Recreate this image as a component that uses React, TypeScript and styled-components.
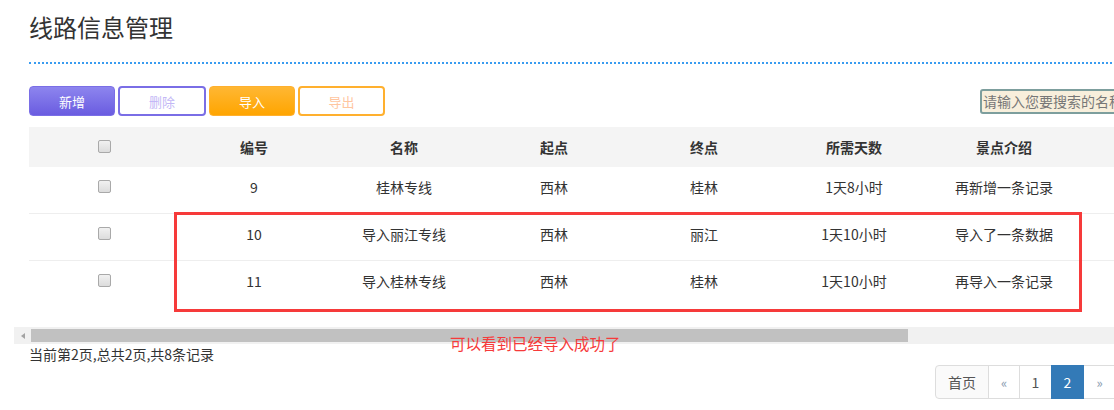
import React from 'react'
import styled, { createGlobalStyle } from 'styled-components'

const GlobalStyle = createGlobalStyle`
  body {
    margin: 0;
    background: #fff;
    overflow: hidden;
    font-family: "Noto Sans CJK SC", "Liberation Sans", sans-serif;
    color: #333;
  }
`

const Page = styled.div`
  position: relative;
  width: 1200px;
  padding-top: 14px;
`

const Title = styled.h2`
  margin: 0 0 0 29px;
  padding-bottom: 22px;
  font-size: 24px;
  line-height: 26px;
  font-weight: 400;
  color: #333;
  border-bottom: 2px dotted #3a9cf0;
`

const Toolbar = styled.div`
  display: flex;
  align-items: center;
  gap: 3px;
  width: 1151px;
  height: 30px;
  margin: 22px 0 11px 29px;
`

const palette = {
  purple: { from: '#8d85ee', to: '#6a5ce0', line: '#7a6ee6', soft: '#c3b8f6' },
  orange: { from: '#ffb733', to: '#ffa500', line: '#ffb02e', soft: '#ffc6a0' },
}

const ActionButton = styled.button<{ $tone: 'purple' | 'orange'; $outline?: boolean; $w: number }>`
  box-sizing: border-box;
  width: ${(p) => p.$w}px;
  height: 30px;
  border-radius: 4px;
  font-family: inherit;
  font-size: 13px;
  cursor: pointer;
  border: ${(p) => (p.$outline ? `2px solid ${palette[p.$tone].line}` : `1px solid ${palette[p.$tone].line}`)};
  background: ${(p) =>
    p.$outline ? '#fff' : `linear-gradient(${palette[p.$tone].from}, ${palette[p.$tone].to})`};
  color: ${(p) => (p.$outline ? palette[p.$tone].soft : '#fff')};
`

const SearchInput = styled.input`
  box-sizing: border-box;
  margin-left: auto;
  width: 200px;
  height: 25px;
  padding: 0 1px;
  border: 2px solid #7d9e9d;
  border-radius: 3px;
  background: #f8efdc;
  font-family: inherit;
  font-size: 14px;
  color: #555;
  outline: none;
  &::placeholder {
    color: #777;
  }
`

const TableWrap = styled.div`
  margin-left: 14px;
  padding: 0 0 20px 15px;
`

const Table = styled.table`
  width: 1200px;
  table-layout: fixed;
  border-collapse: collapse;
  font-size: 14px;
`

const HeadCell = styled.th`
  height: 40px;
  padding: 0 8px;
  background: #f4f4f4;
  font-weight: 700;
  line-height: 20px;
  text-align: center;
  color: #333;
`

const Row = styled.tr`
  & + & td {
    border-top: 1px solid #eee;
  }
`

const Cell = styled.td`
  box-sizing: border-box;
  height: 46px;
  padding: 10px 8px 16px;
  line-height: 20px;
  text-align: center;
  vertical-align: top;
  color: #333;
`

const Check = styled.span`
  display: inline-block;
  box-sizing: border-box;
  width: 13px;
  height: 13px;
  margin-top: 3px;
  border: 1px solid #a9a9a9;
  border-radius: 2px;
  background: linear-gradient(#f1f1f1, #dcdcdc);
  vertical-align: top;
`

const ScrollTrack = styled.div`
  display: flex;
  align-items: center;
  height: 17px;
  margin-left: 14px;
  background: #f1f1f1;
`

const ScrollArrow = styled.div`
  width: 17px;
  height: 17px;
  display: flex;
  align-items: center;
  justify-content: center;
  &::before {
    content: '';
    border-style: solid;
    border-width: 3.5px 4px 3.5px 0;
    border-color: transparent #a3a3a3 transparent transparent;
  }
`

const ScrollThumb = styled.div`
  width: 877px;
  height: 13px;
  background: #c1c1c1;
`

const Summary = styled.div`
  margin-left: 29px;
  font-size: 14px;
  line-height: 20px;
  color: #333;
`

const PagerRow = styled.div`
  display: flex;
  justify-content: flex-end;
  width: 1087px;
  margin: 1px 0 0 29px;
`

const PageItem = styled.span<{ $active?: boolean; $w: number; $first?: boolean }>`
  box-sizing: border-box;
  display: flex;
  align-items: center;
  justify-content: center;
  width: ${(p) => p.$w}px;
  height: 34px;
  margin-left: -1px;
  border: 1px solid ${(p) => (p.$active ? '#337ab7' : '#ddd')};
  border-radius: ${(p) => (p.$first ? '4px 0 0 4px' : '0')};
  background: ${(p) => (p.$active ? '#337ab7' : p.$first ? '#fafafa' : '#fff')};
  color: ${(p) => (p.$active ? '#fff' : '#555')};
  font-size: 14px;
  position: relative;
  z-index: ${(p) => (p.$active ? 1 : 0)};
`

const Arrow = styled.span`
  font-size: 13px;
  color: #8a9bb0;
`

const Callout = styled.div`
  position: absolute;
  left: 174px;
  top: 212px;
  width: 908px;
  height: 100px;
  box-sizing: border-box;
  border: 3px solid #f63a3a;
  pointer-events: none;
`

const CalloutNote = styled.div`
  position: absolute;
  left: 450px;
  top: 332px;
  font-size: 15.5px;
  line-height: 22px;
  color: #f63a3a;
  white-space: nowrap;
`

const columns = ['编号', '名称', '起点', '终点', '所需天数', '景点介绍', '']

const routes = [
  { id: 9, name: '桂林专线', from: '西林', to: '桂林', days: '1天8小时', intro: '再新增一条记录' },
  { id: 10, name: '导入丽江专线', from: '西林', to: '丽江', days: '1天10小时', intro: '导入了一条数据' },
  { id: 11, name: '导入桂林专线', from: '西林', to: '桂林', days: '1天10小时', intro: '再导入一条记录' },
]

export default function App() {
  return (
    <Page>
      <GlobalStyle />
      <Title>线路信息管理</Title>

      <Toolbar>
        <ActionButton $tone="purple" $w={86}>新增</ActionButton>
        <ActionButton $tone="purple" $outline $w={88}>删除</ActionButton>
        <ActionButton $tone="orange" $w={86}>导入</ActionButton>
        <ActionButton $tone="orange" $outline $w={87}>导出</ActionButton>
        <SearchInput placeholder="请输入您要搜索的名称" />
      </Toolbar>

      <TableWrap>
        <Table>
          <thead>
            <tr>
              <HeadCell><Check /></HeadCell>
              {columns.map((c, i) => (
                <HeadCell key={i}>{c}</HeadCell>
              ))}
            </tr>
          </thead>
          <tbody>
            {routes.map((r) => (
              <Row key={r.id}>
                <Cell><Check /></Cell>
                <Cell>{r.id}</Cell>
                <Cell>{r.name}</Cell>
                <Cell>{r.from}</Cell>
                <Cell>{r.to}</Cell>
                <Cell>{r.days}</Cell>
                <Cell>{r.intro}</Cell>
                <Cell />
              </Row>
            ))}
          </tbody>
        </Table>
      </TableWrap>

      <ScrollTrack>
        <ScrollArrow />
        <ScrollThumb />
      </ScrollTrack>

      <Summary>当前第2页,总共2页,共8条记录</Summary>

      <PagerRow>
        <PageItem $w={54} $first>首页</PageItem>
        <PageItem $w={32}><Arrow>«</Arrow></PageItem>
        <PageItem $w={33}>1</PageItem>
        <PageItem $w={33} $active>2</PageItem>
        <PageItem $w={33}><Arrow>»</Arrow></PageItem>
      </PagerRow>

      <Callout />
      <CalloutNote>可以看到已经导入成功了</CalloutNote>
    </Page>
  )
}
